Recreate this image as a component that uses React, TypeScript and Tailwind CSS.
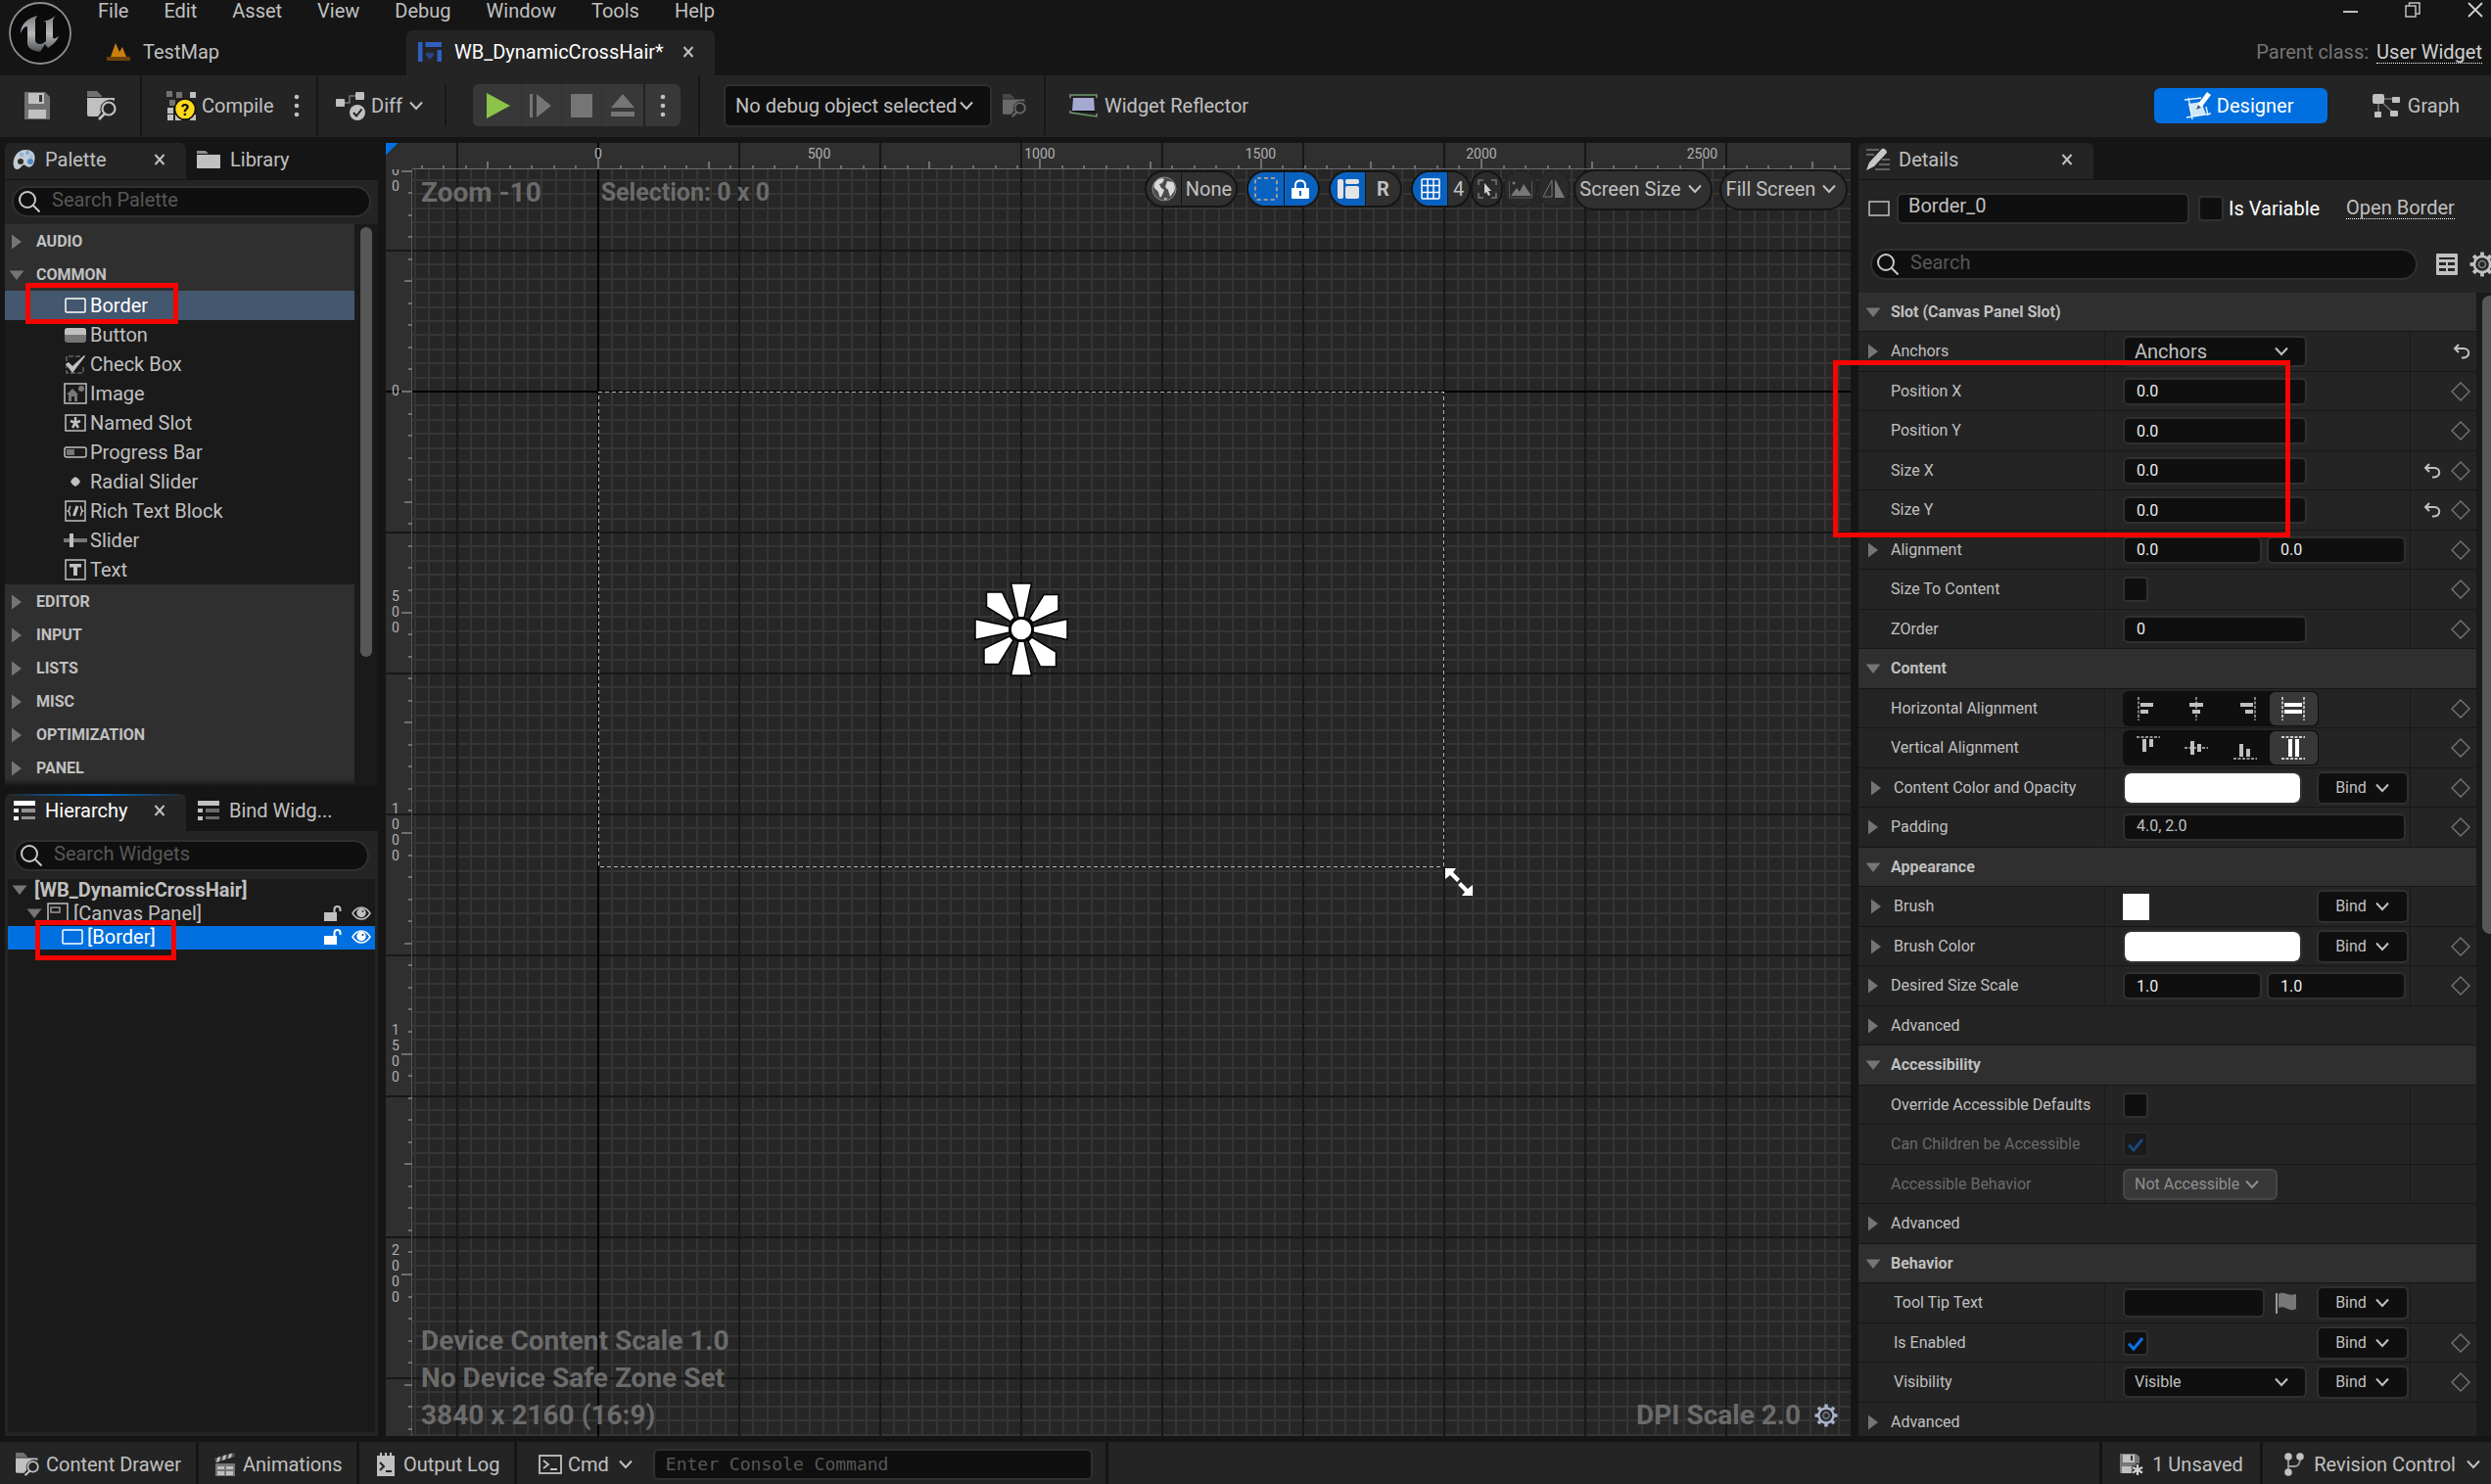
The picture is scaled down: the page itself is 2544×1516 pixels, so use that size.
import { type ReactNode } from 'react';
import clsx from 'clsx';

/* ---------- shared bits ---------- */

function Chevron({ className = '' }: { className?: string }) {
  return (
    <svg viewBox="0 0 16 10" className={clsx('h-[10px] w-4 shrink-0', className)} fill="none" stroke="currentColor" strokeWidth="2">
      <path d="M2 1.500 8 8l6-6.500" />
    </svg>
  );
}

function Caret({ open = false }: { open?: boolean }) {
  return open ? (
    <svg viewBox="0 0 16 16" className="h-4 w-4 shrink-0" fill="#757575"><path d="M.5 3.500h15L8 13z" /></svg>
  ) : (
    <svg viewBox="0 0 16 16" className="h-4 w-4 shrink-0" fill="#757575"><path d="M3 .5V15.500L13 8z" /></svg>
  );
}

function CloseX() {
  return (
    <svg viewBox="0 0 12 12" className="h-3 w-3" stroke="currentColor" strokeWidth="2"><path d="M1.500 1 10.500 11M10.500 1 1.500 11" /></svg>
  );
}

function Dots() {
  return (
    <svg viewBox="0 0 6 24" className="h-6 w-[6px]" fill="currentColor">
      <circle cx="3" cy="3" r="2.300" /><circle cx="3" cy="12" r="2.300" /><circle cx="3" cy="21" r="2.300" />
    </svg>
  );
}

function BrowseIcon({ className = '' }: { className?: string }) {
  return (
    <svg viewBox="0 0 30 30" className={clsx('shrink-0', className)}>
      <path d="M0 0h10l5 5v1H0z" fill="currentColor" opacity=".5" />
      <path d="M0 7h28v3a10 10 0 0 0-14 12l-3 4H2a2 2 0 0 1-2-2z" fill="currentColor" />
      <circle cx="22" cy="18" r="6.500" fill="none" stroke="currentColor" strokeWidth="2.200" />
      <path d="m18 23-6 6" stroke="currentColor" strokeWidth="2.600" />
    </svg>
  );
}

function SearchIcon() {
  return (
    <svg viewBox="0 0 22 22" className="h-[22px] w-[22px] shrink-0" fill="none" stroke="#c8c8c8" strokeWidth="2">
      <circle cx="9" cy="9" r="8" /><path d="m14.500 14.500 7 7" />
    </svg>
  );
}

function SearchBox({ placeholder, className = '' }: { placeholder: string; className?: string }) {
  return (
    <label className={clsx('flex h-8 shrink-0 items-center gap-3 rounded-full border-2 border-[#303030] bg-[#0f0f0f] pl-[5px] pr-4', className)}>
      <SearchIcon />
      <input aria-label={placeholder} placeholder={placeholder} className="min-w-0 flex-1 bg-transparent pb-1 text-xl leading-6 text-[#c0c0c0] outline-none placeholder:text-[#575757]" />
    </label>
  );
}

function ListIcon({ className = '' }: { className?: string }) {
  return (
    <svg viewBox="0 0 22 20" className={clsx('h-5 w-[22px]', className)} fill="currentColor">
      <path d="M0 0h22v5H0zM0 8h5v4H0zM0 16h5v4H0z" />
      <path d="M8 8h14v4H8zM8 16h14v3H8z" opacity=".5" />
    </svg>
  );
}

function Gear({ className = '' }: { className?: string }) {
  return (
    <svg viewBox="-12 -12 24 24" className={className} fill="none" stroke="currentColor">
      <circle r="7.500" strokeWidth="2.400" />
      <circle r="3.200" strokeWidth="1.500" opacity=".6" />
      {[0, 45, 90, 135, 180, 225, 270, 315].map((a) => (
        <path key={a} d="M0-8v-3.500" strokeWidth="3.500" transform={`rotate(${a})`} />
      ))}
    </svg>
  );
}

/* ---------- title bar and toolbar ---------- */

const menus = ['File', 'Edit', 'Asset', 'View', 'Debug', 'Window', 'Tools', 'Help'];

function UnrealLogo() {
  return (
    <svg viewBox="0 0 64 64" className="h-16 w-16">
      <defs>
        <linearGradient id="metal" x1="0" y1="0" x2="0" y2="1">
          <stop offset="0" stopColor="#7c8084" />
          <stop offset=".5" stopColor="#b4b8ba" />
          <stop offset="1" stopColor="#4f5254" />
        </linearGradient>
      </defs>
      <circle cx="32" cy="32" r="31" fill="#0b0b0b" stroke="#8d8f90" strokeWidth="1.800" />
      <path
        d="M12 32c0-9 7-16 18-18-2 1-3 3-3 5v20c0 3 3 4 5 4s4-1 6-3V22c0-2-1-3-3-2 5-1 9-3 13-6-2 2-3 4-3 6v16c0 2 2 2 6-1-2 5-6 9-11 12l-3-4-5 8c-7-1-12-3-13-8V27c0-4-4-2-7 5z"
        fill="url(#metal)"
      />
    </svg>
  );
}

function TitleBar() {
  return (
    <header className="flex h-[77px] shrink-0 bg-[#151515]">
      <div className="pl-[9px] pt-[2px]"><UnrealLogo /></div>
      <div className="flex min-w-0 flex-1 flex-col pl-[9px]">
        <nav className="flex h-[31px] items-start">
          {menus.map((m) => (
            <button key={m} className="px-[18px] pb-2 leading-[22px]">{m}</button>
          ))}
          <div className="ml-auto flex items-start gap-12 pr-2 pt-[2px]">
            <button aria-label="Minimize"><svg viewBox="0 0 16 16" className="h-4 w-4"><path d="M1 10h15" stroke="#c0c0c0" strokeWidth="2" /></svg></button>
            <button aria-label="Restore">
              <svg viewBox="0 0 16 16" className="h-4 w-4" fill="none" stroke="#c0c0c0" strokeWidth="1.500"><path d="M1 4h10v11H1zM4.500 4V1H15v11h-4" /></svg>
            </button>
            <button aria-label="Close window"><svg viewBox="0 0 16 16" className="h-4 w-4" stroke="#d0d0d0" strokeWidth="1.800"><path d="m1 1 14 14M15 1 1 15" /></svg></button>
          </div>
        </nav>
        <div className="flex flex-1 items-stretch pl-[27px]">
          <button className="flex w-[306px] items-center gap-[13px] pb-[2px]">
            <svg viewBox="0 0 24 20" className="h-5 w-6"><path d="M0 15h24v4H0z" fill="#6b4208" /><path d="M4 15 9 1l4 9 3-5 4 10z" fill="#c9800e" /></svg>
            TestMap
          </button>
          <div className="flex w-[315px] items-center rounded-t-md bg-[#242424] pb-[2px] pl-3 text-white">
            <svg viewBox="0 0 24 20" className="h-5 w-6" fill="#2f5fc0"><path d="M0 0h4.500v20H0zM7.500 0H24v5H7.500zM19.500 8H24v12h-4.500z" /><path d="M12 18 8 13.500c-1-3 3-4 4-1.500 1-2.500 5-1.500 4 1.500z" fill="#2a4580" /></svg>
            <span className="pl-[13px]">WB_DynamicCrossHair*</span>
            <button aria-label="Close WB_DynamicCrossHair" className="ml-auto mr-[21px] text-[#c0c0c0]"><CloseX /></button>
          </div>
          <div className="ml-auto flex items-center gap-2 pb-[2px] pr-[9px]">
            <span className="text-[#757575]">Parent class:</span>
            <a href="#user-widget" className="border-b border-dotted border-white leading-[22px] text-[#d0d0d0]">User Widget</a>
          </div>
        </div>
      </div>
    </header>
  );
}

function Toolbar() {
  return (
    <div className="flex h-[63px] shrink-0 items-stretch bg-[#242424] pb-[2px] pr-8">
      <div className="flex w-[145px] items-center border-r-2 border-[#151515] pl-[25px]">
        <button aria-label="Save">
          <svg viewBox="0 0 26 28" className="h-7 w-[26px]" fill="#c0c0c0"><path d="M0 0h21l5 5v23H0z" fill="#707070" /><path d="M4 1h16v11H4z" /><path d="M15 3h3v7h-3z" fill="#333" /><path d="M4 18h18v9H4z" /></svg>
        </button>
        <button aria-label="Browse" className="ml-[38px]"><BrowseIcon className="h-[30px] w-[30px]" /></button>
      </div>
      <div className="flex w-[180px] items-center border-r-2 border-[#151515] pl-[25px]">
        <button className="flex items-center gap-[6px]">
          <svg viewBox="0 0 30 30" className="h-[30px] w-[30px]" fill="#c0c0c0">
            <path d="M0 0h6v6H0zM10 1h6v6h-6zM3 9h6v6H3z" opacity=".5" />
            <path d="M24 1h6v6h-6zM1 17h6v6H1zM1 24h6v6H1zM9 24h6v6H9zM24 24h6v6h-6z" />
            <circle cx="19" cy="18.500" r="10.500" fill="#ffd91a" stroke="#111" strokeWidth="1.500" />
            <text x="19" y="24.500" textAnchor="middle" fontSize="17" fontWeight="700" fill="#111">?</text>
          </svg>
          Compile
        </button>
        <button aria-label="Compile options" className="ml-5"><Dots /></button>
      </div>
      <div className="flex w-[129px] items-center pl-[18px]">
        <button className="flex items-center gap-[6px]">
          <svg viewBox="0 0 30 30" className="h-[30px] w-[30px]" fill="#c0c0c0">
            <path d="M8 12h6V5h8" fill="none" stroke="#777" strokeWidth="1.500" />
            <rect x="0" y="8" width="9" height="8" rx="1" /><rect x="20" y="1" width="9" height="8" rx="1" />
            <circle cx="22" cy="22" r="8" /><path d="m18 22 3 3.500 5.500-7" fill="none" stroke="#222" strokeWidth="2" />
          </svg>
          Diff
          <Chevron />
        </button>
      </div>
      <div className="my-[9px] w-[2px] bg-[#171717]" />
      <div className="my-[9px] ml-[27px] flex w-[212px] items-stretch overflow-hidden rounded-md bg-[#383838]">
        <button aria-label="Play" className="grid w-[50px] place-items-center border-r border-[#303030] pl-[2px]"><svg viewBox="0 0 24 26" className="h-[26px] w-6"><path d="M0 0v26l24-13z" fill="#8bc24a" /></svg></button>
        <button aria-label="Step" className="grid w-[41px] place-items-center border-r border-[#303030]"><svg viewBox="0 0 24 24" className="h-6 w-6" fill="#757575"><path d="M0 0h3v24H0zM7 0v24l15-12z" /></svg></button>
        <button aria-label="Stop" className="grid w-[41px] place-items-center border-r border-[#303030]"><svg viewBox="0 0 22 24" className="h-6 w-[22px]"><path d="M0 0h22v24H0z" fill="#757575" /></svg></button>
        <button aria-label="Eject" className="grid w-[42px] place-items-center"><svg viewBox="0 0 24 24" className="h-6 w-6" fill="#757575"><path d="M12 0 24 14H0zM0 18h24v5H0z" /></svg></button>
        <button aria-label="Play options" className="grid flex-1 place-items-center border-l-2 border-[#222]"><Dots /></button>
      </div>
      <div className="ml-[18px] w-[2px] bg-[#171717]" />
      <div className="relative my-auto ml-6 w-[274px]">
        <select aria-label="Debug object" className="h-11 w-full appearance-none rounded-md border-2 border-[#303030] bg-[#0f0f0f] pl-[10px] text-[#c0c0c0]">
          <option>No debug object selected</option>
        </select>
        <Chevron className="pointer-events-none absolute right-[18px] top-[17px]" />
      </div>
      <button aria-label="Locate debug object" className="ml-[11px] text-[#6a6a6a]"><BrowseIcon className="h-6 w-6" /></button>
      <div className="ml-[18px] w-[2px] bg-[#171717]" />
      <button className="ml-6 flex items-center gap-[6px]">
        <svg viewBox="0 0 30 24" className="h-6 w-[30px]"><path d="M4 4h21l1 14-23-1z" fill="#a4aad0" /><path d="M3 17h23l2 2-25-1z" fill="#111" /><path d="M1 4V1h27v3M1 17v2l27 4v-3" fill="none" stroke="#6d9b6e" strokeWidth="1.500" /></svg>
        Widget Reflector
      </button>
      <div className="ml-auto flex items-center">
        <button className="flex h-9 w-[177px] items-center gap-[6px] rounded-md bg-[#0070e0] pl-[30px] text-white">
          <svg viewBox="0 0 28 28" className="h-7 w-7"><path d="M5 12 18 10l5 13-15 2z" fill="#cfe6f8" /><path d="M1 8l17-2M5 6l4 22M3 26l25-4M23 15l2 9" stroke="#e8f3fc" strokeWidth="1.400" fill="none" /><path d="m13 18 2-6L24 0l4 3-10 13z" fill="#fff" /><path d="m13 18 2-5 3 3z" fill="#3b5d80" /></svg>
          Designer
        </button>
        <button className="ml-[46px] flex items-center gap-2">
          <svg viewBox="0 0 28 24" className="h-6 w-7" fill="#c0c0c0"><path d="M6 5h18M6 5v16M6 5l16 15" stroke="#777" strokeWidth="1.500" /><rect width="12" height="10" rx="2" /><rect x="20" y="3" width="8" height="6" rx="1" /><rect x="2" y="18" width="7" height="6" rx="1" /><rect x="18" y="17" width="8" height="6" rx="1" /></svg>
          Graph
        </button>
      </div>
    </div>
  );
}

/* ---------- palette ---------- */

const paletteItems: { name: string; icon: ReactNode }[] = [
  { name: 'Border', icon: <rect x="2" y="5" width="20" height="14" rx="1" fill="none" stroke="currentColor" strokeWidth="1.500" /> },
  { name: 'Button', icon: <><rect x="1" y="5" width="22" height="15" rx="3" fill="#767676" /><path d="M4 5h16a3 3 0 0 1 3 3v4H1V8a3 3 0 0 1 3-3z" fill="currentColor" /></> },
  { name: 'Check Box', icon: <><path d="M17 4H3v17h17v-8" fill="none" stroke="#666" strokeWidth="1.500" strokeDasharray="5 2" /><path d="m2 12 3-2 4 4L21 3l1 1L9 21z" fill="currentColor" /></> },
  { name: 'Image', icon: <><rect x="1" y="2" width="22" height="20" fill="none" stroke="currentColor" strokeWidth="1.500" /><path d="M9 7 3 13h2v7h3v-5h3v5h3v-7h1z" fill="#777" /><circle cx="18" cy="7" r="3" fill="#777" /></> },
  { name: 'Named Slot', icon: <><rect x="2" y="4" width="20" height="16" fill="none" stroke="currentColor" strokeWidth="1.500" /><path d="M12 6v6m0 0-5-2m5 2 5-2m-5 2-3 5m3-5 3 5" stroke="currentColor" strokeWidth="2.500" /></> },
  { name: 'Progress Bar', icon: <><rect x="1" y="7" width="22" height="10" rx="2" fill="none" stroke="currentColor" strokeWidth="1.500" /><path d="M3 9h8v6H3z" fill="#777" /></> },
  { name: 'Radial Slider', icon: <path d="m12 7 3 2 2 3-2 3-3 2-3-2-2-3 2-3z" fill="currentColor" /> },
  { name: 'Rich Text Block', icon: <><rect x="2" y="2" width="20" height="20" fill="none" stroke="currentColor" strokeWidth="1.500" /><path d="M7 7c-2 2 0 4-2.500 5 2.500 1 .5 3 2.500 5M17 7c2 2 0 4 2.500 5-2.500 1-.5 3-2.500 5" fill="none" stroke="currentColor" strokeWidth="1.500" /><path d="m14 7-3.500 10" stroke="currentColor" strokeWidth="3" /></> },
  { name: 'Slider', icon: <><path d="M0 10h24v4H0z" fill="#777" /><path d="M6 5h4v14H6z" fill="currentColor" /></> },
  { name: 'Text', icon: <><rect x="2" y="2" width="20" height="20" fill="none" stroke="currentColor" strokeWidth="1.500" /><path d="M6 6h12v3.500h-4V18h-4V9.500H6z" fill="currentColor" /></> },
];

function CategoryRow({ name, open = false }: { name: string; open?: boolean }) {
  return (
    <button className="flex h-[34px] w-full shrink-0 items-center gap-3 bg-[#2f2f2f] pl-1 pt-[2px] text-base font-bold">
      <Caret open={open} />
      {name}
    </button>
  );
}

function PalettePanel() {
  return (
    <section className="flex min-h-0 flex-1 flex-col">
      <div className="flex h-[38px] shrink-0 items-stretch">
        <div className="mb-px flex w-[185px] items-center rounded-t-md bg-[#242424] pb-[3px] pl-2">
          <svg viewBox="0 0 24 24" className="h-6 w-6"><path d="M2 21C-2 14 3 2 13 2c8 0 11 5 9 12-1 6-6 7-9 4-2-1-3 0-4 1-2 3-5 4-7 2z" fill="#c3ccd3" /><circle cx="9" cy="7" r="2.300" fill="#8fb4d4" /><circle cx="15" cy="5" r="2" fill="#7fa9cf" /><circle cx="19" cy="9" r="2" fill="#9cc0dd" /><circle cx="18" cy="14" r="3" fill="#4f8ac4" /><circle cx="8" cy="14" r="3" fill="#2a2a2a" /></svg>
          <span className="pl-[9px]">Palette</span>
          <button aria-label="Close Palette" className="ml-auto mr-[21px]"><CloseX /></button>
        </div>
        <button className="flex items-center gap-[10px] pb-1 pl-[11px]">
          <svg viewBox="0 0 24 18" className="h-[18px] w-6" fill="#c0c0c0"><path d="M0 0h9l3 3H0z" opacity=".7" /><path d="M0 4h24v14H0z" /></svg>
          Library
        </button>
      </div>
      <div className="flex min-h-0 flex-1 flex-col bg-[#242424]">
        <SearchBox placeholder="Search Palette" className="mx-[7px] mb-[7px] mt-[6px]" />
        <div className="flex min-h-0 flex-1">
          <div className="relative min-w-0 flex-1 overflow-hidden bg-[#1a1a1a]">
            <CategoryRow name="AUDIO" />
            <CategoryRow name="COMMON" open />
            {paletteItems.map(({ name, icon }, i) => (
              <button key={name} className={clsx('relative flex h-[30px] w-full items-center gap-[3px] pl-[60px]', i === 0 && 'bg-[#43576e] text-white')}>
                <svg viewBox="0 0 24 24" className="h-6 w-6 shrink-0">{icon}</svg>
                {name}
                {i === 0 && <span className="absolute -top-2 left-[21px] h-[42px] w-[156px] border-[5px] border-[#f50400]" />}
              </button>
            ))}
            {['EDITOR', 'INPUT', 'LISTS', 'MISC', 'OPTIMIZATION', 'PANEL'].map((c) => <CategoryRow key={c} name={c} />)}
            <div className="absolute inset-x-0 bottom-0 h-2 bg-linear-to-b from-transparent to-[#1a1a1a]" />
          </div>
          <div className="w-6 bg-[#1a1a1a] pl-[6px] pt-[3px]"><div className="h-[77%] w-3 rounded-full bg-[#575757]" /></div>
        </div>
      </div>
    </section>
  );
}

/* ---------- hierarchy ---------- */

function RowToggles() {
  return (
    <div className="ml-auto flex items-center gap-[10px] pr-1">
      <button aria-label="Toggle lock">
        <svg viewBox="0 0 18 18" className="block h-[18px] w-[18px]" fill="currentColor"><path d="M0 8h13v9H0z" /><path d="M10.500 9V5c0-4 6-4 6 0v2" fill="none" stroke="currentColor" strokeWidth="2" /></svg>
      </button>
      <button aria-label="Toggle visibility">
        <svg viewBox="0 0 20 14" className="block h-[14px] w-5" fill="none" stroke="currentColor" strokeWidth="1.500"><path d="M1 7c5-8 13-8 18 0-5 8-13 8-18 0z" /><circle cx="10" cy="6.500" r="4" fill="currentColor" /><circle cx="11.500" cy="5" r="1" fill="#333" stroke="none" /></svg>
      </button>
    </div>
  );
}

function HierarchyPanel() {
  return (
    <section className="flex min-h-0 flex-1 flex-col">
      <div className="flex h-[38px] shrink-0 items-stretch">
        <div className="relative flex w-[185px] items-center overflow-hidden rounded-t-md bg-[#242424] pb-1 pl-[9px] text-white">
          <div className="absolute inset-x-0 top-0 h-[2px] bg-linear-to-r from-transparent via-[#0070e0] to-transparent" />
          <ListIcon />
          <span className="pl-[10px]">Hierarchy</span>
          <button aria-label="Close Hierarchy" className="ml-auto mr-[21px] text-[#c0c0c0]"><CloseX /></button>
        </div>
        <button className="flex items-center gap-[10px] pb-1 pl-3"><ListIcon />Bind Widg...</button>
      </div>
      <div className="flex min-h-0 flex-1 flex-col bg-[#242424] px-[3px] pb-1">
        <SearchBox placeholder="Search Widgets" className="mx-[6px] mb-2 mt-[9px]" />
        <div className="flex-1 bg-[#1a1a1a]">
          <div className="flex h-6 items-center gap-[7px] pb-[2px] pl-1 font-bold"><Caret open />[WB_DynamicCrossHair]</div>
          <div className="flex h-6 items-center pb-[2px] pl-[19px]">
            <Caret open />
            <svg viewBox="0 0 22 22" className="mx-[5px] h-[22px] w-[22px]" fill="none" stroke="#c0c0c0" strokeWidth="1.500"><path d="M1 22V1h20v21" /><rect x="4" y="5" width="9" height="5" stroke="#999" /></svg>
            [Canvas Panel]
            <RowToggles />
          </div>
          <div className="relative flex h-6 items-center bg-[#0070e0] pb-[2px] pl-[55px] text-white">
            <svg viewBox="0 0 22 16" className="mr-1 h-4 w-[22px]" fill="none" stroke="currentColor" strokeWidth="1.500"><rect x="1" y="1" width="20" height="14" rx="1" /></svg>
            [Border]
            <RowToggles />
            <span className="absolute -top-[6px] left-7 h-[41px] w-36 border-[5px] border-[#f50400]" />
          </div>
        </div>
      </div>
    </section>
  );
}

/* ---------- designer canvas ---------- */

// Canvas origin inside the viewport and the zoom factor (px per slate unit)
const ORIGIN_X = 217;
const ORIGIN_Y = 254;
const SCALE = 0.451;
const RULER = 27;
const minor = [1, 2, 3, 4, 5, 6, 7, 8, 9].map((i) => Math.round(i * 14.4));
const ticks = Array.from({ length: 84 }, (_, i) => (i - 14) * 50);

function Viewport() {
  return (
    <svg className="absolute inset-0 h-full w-full" shapeRendering="crispEdges">
      <defs>
        <pattern id="minor" x={ORIGIN_X} y={ORIGIN_Y} width="144" height="144" patternUnits="userSpaceOnUse">
          {minor.map((p) => <path key={p} d={`M${p} 0V144M0 ${p}H144`} stroke="#353535" strokeWidth="2" />)}
        </pattern>
        <pattern id="major" x={ORIGIN_X - 1} y={ORIGIN_Y - 1} width="144" height="144" patternUnits="userSpaceOnUse">
          <path d="M0 0h2v144H0zM0 0h144v2H0z" fill="#171717" />
        </pattern>
        <clipPath id="leftRuler"><rect x="0" y={RULER} width={RULER} height="100%" /></clipPath>
      </defs>
      <rect width="100%" height="100%" fill="#262626" />
      <rect width="100%" height="100%" fill="url(#minor)" />
      <rect width="100%" height={RULER} fill="#2f2f2f" />
      <rect width={RULER} height="100%" fill="#2f2f2f" />
      <rect width="100%" height="100%" fill="url(#major)" />
      <rect x={ORIGIN_X - 1} y="0" width="2" height="100%" fill="#000" />
      <rect x="0" y={ORIGIN_Y - 1} width="100%" height="2" fill="#000" />
      <rect width={RULER} height={RULER} fill="#2f2f2f" />
      <path d="M0 0h12L0 12z" fill="#0070e0" />
      <rect x={RULER} y={RULER - 1} width="100%" height="1" fill="#6a6a6a" />
      <rect x={RULER - 1} y={RULER} width="1" height="100%" fill="#555" />
      {ticks.map((v) => {
        const size = v % 500 === 0 ? 11 : v % 250 === 0 ? 8 : 4;
        const x = Math.round(ORIGIN_X + v * SCALE);
        const y = Math.round(ORIGIN_Y + v * SCALE);
        return (
          <g key={v} fill="#6f6f6f">
            {x > RULER && <rect x={x - 1} y={RULER - size} width="2" height={size} />}
            {y > RULER && <rect x={RULER - size} y={y - 1} width={size} height="2" />}
          </g>
        );
      })}
      <g fill="#b0b0b0" fontSize="14" textAnchor="middle">
        {[0, 500, 1000, 1500, 2000, 2500].map((v) => <text key={v} x={ORIGIN_X + v * SCALE} y="16">{v}</text>)}
        <g clipPath="url(#leftRuler)">
          {[-500, 0, 500, 1000, 1500, 2000].map((v) => {
            const digits = String(Math.abs(v)).split('');
            const top = ORIGIN_Y + v * SCALE - digits.length * 8 + 12;
            return (
              <text key={v}>
                {digits.map((d, i) => <tspan key={i} x="10" y={top + i * 16}>{d}</tspan>)}
              </text>
            );
          })}
        </g>
      </g>
      <rect x={ORIGIN_X} y={ORIGIN_Y} width="863" height="485" fill="none" stroke="#1b1b1b" />
      <rect x={ORIGIN_X} y={ORIGIN_Y} width="863" height="485" fill="none" stroke="#b5b5b5" strokeDasharray="4 3" />
      <g transform="translate(649 497)" fill="#fff" stroke="#000" strokeWidth="1.500" shapeRendering="auto">
        {[0, 90, 180, 270].map((a) => (
          <g key={a} transform={`rotate(${a})`}>
            <path d="M-10.500-47h21L3-12h-6z" />
            <path d="M-35.500-38h16L-7-12l-4 4-24.500-15z" />
          </g>
        ))}
        <circle r="11.500" strokeWidth="2.500" />
      </g>
      <path d="M0 0h11L8 4l7 7-3 3-7-7-5 4zM28 28H17l3-4-7-7 3-3 7 7 5-4z" transform="translate(1082 741)" fill="#fff" shapeRendering="auto" />
    </svg>
  );
}

const pill = 'flex h-[38px] items-stretch overflow-hidden rounded-[19px] border-2 border-[#151515] bg-[#303030]';

function ViewportBar() {
  return (
    <div className="absolute right-[3px] top-[27px] flex items-start">
      <div className={clsx(pill, 'mt-px w-[95px]')}>
        <button aria-label="Localization" className="grid w-9 place-items-center border-r border-[#151515]">
          <svg viewBox="0 0 26 26" className="h-[26px] w-[26px]"><circle cx="13" cy="13" r="12" fill="#4c4c4c" stroke="#8a8a8a" /><path d="M4 6c4-5 8-4 9-3l-2 4-3 1 2 4 3 2-2 5-2 3c-2-3-1-6-4-8s-3-5-1-8zM16 5l6 1c3 5 2 9 0 11l-3 4-2-7-3-3zM13 22l4 1-4 1z" fill="#d8d8d8" /></svg>
        </button>
        <button className="flex-1 text-center">None</button>
      </div>
      <div className={clsx(pill, 'ml-[9px] mt-px w-[75px]')}>
        <button aria-label="Show outlines" className="grid w-[37px] place-items-center border-r border-[#151515] bg-[#0a62c0]">
          <svg viewBox="0 0 26 26" className="h-[26px] w-[26px]"><rect x="2" y="2" width="22" height="22" rx="2" fill="none" stroke="#9a9a9a" strokeWidth="2" strokeDasharray="4 3" /></svg>
        </button>
        <button aria-label="Respect locks" className="flex flex-1 items-center bg-[#0a62c0] pl-[7px]">
          <svg viewBox="0 0 18 20" className="h-5 w-[18px]"><path d="M4 9V6c0-6 10-6 10 0v3" fill="none" stroke="#fff" strokeWidth="2" /><rect x="0" y="9" width="18" height="11" rx="1" fill="#fff" /><path d="M8 12h2v5H8z" fill="#0a62c0" /></svg>
        </button>
      </div>
      <div className={clsx(pill, 'ml-[9px] mt-px w-[75px]')}>
        <button aria-label="Layout flow" className="grid w-9 place-items-center border-r border-[#151515] bg-[#0a62c0]">
          <svg viewBox="0 0 22 20" className="h-5 w-[22px]" fill="#e4e4e4"><rect width="6" height="20" rx="2" /><rect x="8" width="14" height="5" rx="2" /><rect x="8" y="7" width="14" height="13" rx="2" /></svg>
        </button>
        <button className="flex-1 text-center text-xl font-bold">R</button>
      </div>
      <div className={clsx(pill, 'ml-[9px] mt-px w-[61px]')}>
        <button aria-label="Grid snapping" className="grid w-9 place-items-center border-r border-[#151515] bg-[#0a62c0]">
          <svg viewBox="0 0 20 22" className="h-[22px] w-5" fill="none" stroke="#fff" strokeWidth="1.500"><rect x="1" y="1" width="18" height="20" rx="1" /><path d="M7 1v20M13 1v20M1 7.500h18M1 14.500h18" /></svg>
        </button>
        <button className="flex-1 text-center">4</button>
      </div>
      <button aria-label="Selection mode" className="mt-px grid h-[38px] w-[33px] place-items-center rounded-full border-2 border-[#151515] bg-[#2b2b2b]">
        <svg viewBox="0 0 20 20" className="h-5 w-5"><path d="M1 6V1h5M14 1h5v5M19 14v5h-5M6 19H1v-5" fill="none" stroke="#777" strokeWidth="1.500" /><path d="m7 4 7 8h-3l2 4-2 1-2-4-2 2z" fill="#d0d0d0" /></svg>
      </button>
      <button aria-label="Background image" className="ml-px mt-px grid h-[38px] w-[34px] place-items-center rounded-full border border-[#202020] bg-[#2a2a2a]">
        <svg viewBox="0 0 24 20" className="h-5 w-6" fill="#777"><path d="m2 17 6-8 3 4 4-8 8 12z" /><circle cx="5" cy="4" r="1.500" /><path d="M.5 2v17h23V2" fill="none" stroke="#555" /></svg>
      </button>
      <button aria-label="Flip preview" className="ml-px mr-1 mt-px grid h-[38px] w-8 place-items-center rounded-full border border-[#202020] bg-[#2a2a2a]">
        <svg viewBox="0 0 24 20" className="h-5 w-6"><path d="M10 1v17H1z" fill="none" stroke="#777" /><path d="M13 0v19h10z" fill="#777" /></svg>
      </button>
      <button className="flex h-[42px] w-[142px] items-center justify-center gap-[6px] rounded-[21px] border-2 border-[#151515] bg-[#303030] pb-[2px] pr-1 whitespace-nowrap">Screen Size<Chevron /></button>
      <button className="ml-[7px] flex h-[42px] w-[131px] items-center justify-center gap-[6px] rounded-[21px] border-2 border-[#151515] bg-[#303030] pb-[2px] pr-1 whitespace-nowrap">Fill Screen<Chevron /></button>
    </div>
  );
}

function DesignerCanvas() {
  return (
    <main className="relative min-w-0 flex-1 overflow-hidden bg-[#262626]">
      <Viewport />
      <div className="absolute left-9 top-[35px] flex items-center gap-[61px] font-bold text-[#6b6b6b]">
        <span className="text-[28px] leading-8">Zoom -10</span>
        <span className="text-[25px] leading-8">Selection: 0 x 0</span>
      </div>
      <ViewportBar />
      <div className="absolute bottom-[2px] left-9 text-[28px] font-bold leading-[38px] text-[#6b6b6b]">
        <p>Device Content Scale 1.0</p>
        <p>No Device Safe Zone Set</p>
        <p>3840 x 2160 (16:9)</p>
      </div>
      <div className="absolute bottom-[2px] right-[13px] flex items-center gap-[14px] text-[28px] font-bold leading-[38px] text-[#6b6b6b]">
        DPI Scale 2.0
        <button aria-label="DPI settings" className="text-[#a9b4c9]"><Gear className="h-6 w-6" /></button>
      </div>
    </main>
  );
}

/* ---------- details ---------- */

const fieldBox = 'rounded-md border-2 border-[#303030] bg-[#0f0f0f]';

function slug(label: string) {
  return label.toLowerCase().replace(/\s+/g, '-');
}

function NumberField({ id, label, value, half = false }: { id?: string; label?: string; value: string; half?: boolean }) {
  return <input id={id} aria-label={label} defaultValue={value} className={clsx(fieldBox, 'h-7 pl-3 text-base leading-5 text-[#ededed]', half ? 'w-[142px]' : 'w-[188px]')} />;
}

function CheckField({ id, checked = false, disabled = false }: { id: string; checked?: boolean; disabled?: boolean }) {
  return (
    <span className={clsx('relative block h-[26px] w-[26px]', disabled && 'opacity-45')}>
      <input id={id} type="checkbox" defaultChecked={checked} disabled={disabled} className="peer block h-[26px] w-[26px] appearance-none rounded border-2 border-[#303030] bg-[#0f0f0f]" />
      <svg viewBox="0 0 26 26" className="pointer-events-none absolute inset-0 hidden peer-checked:block" fill="none" stroke="#0a74e8" strokeWidth="3"><path d="m6 13.500 5 5.500 9-11" /></svg>
    </span>
  );
}

function SelectField({ id, value, className, disabled = false }: { id: string; value: string; className?: string; disabled?: boolean }) {
  return (
    <span className={clsx('relative block', disabled ? 'w-[158px] text-[#909090]' : 'w-[188px]')}>
      <select id={id} disabled={disabled} className={clsx('block h-8 w-full appearance-none rounded-md border-2 pl-[10px] opacity-100', disabled ? 'border-[#474747] bg-[#383838]' : 'border-[#303030] bg-[#0f0f0f]', className)}>
        <option>{value}</option>
      </select>
      <Chevron className="pointer-events-none absolute right-[18px] top-[11px]" />
    </span>
  );
}

function ColorField({ id }: { id: string }) {
  return <button id={id} className="h-[34px] w-[183px] rounded-lg border-2 border-[#303030] bg-white bg-clip-padding" />;
}

function ResetButton({ label }: { label: string }) {
  return (
    <button aria-label={`Reset ${label}`}>
      <svg viewBox="0 0 18 16" className="block h-4 w-[18px]" fill="none" stroke="#c0c0c0" strokeWidth="2"><path d="M6 1 2 5l4 4M2 5h9c7 0 7 9 0 9.500H9" /></svg>
    </button>
  );
}

const rowBase = 'relative flex h-10 even:h-[41px] shrink-0 border-b border-[#171717] text-base';

function Section({ title }: { title: string }) {
  return (
    <button className={clsx(rowBase, 'items-center gap-[10px] bg-[#2f2f2f] pl-[7px] text-left font-bold')}>
      <Caret open />
      {title}
    </button>
  );
}

function Advanced() {
  return (
    <button className={clsx(rowBase, 'items-center gap-[10px] bg-[#242424] pl-[7px] text-left')}>
      <Caret />
      Advanced
    </button>
  );
}

type PropRowProps = {
  label: string;
  arrow?: boolean;
  bind?: boolean;
  disabled?: boolean;
  reset?: boolean;
  keyed?: boolean;
  group?: boolean;
  overlay?: ReactNode;
  children: ReactNode;
};

function PropRow({ label, arrow, bind, disabled, reset, keyed, group, overlay, children }: PropRowProps) {
  return (
    <div className={clsx(rowBase, 'bg-[#242424]')}>
      <div className={clsx('flex min-w-0 flex-1 items-center gap-[10px]', bind ? 'pl-[10px]' : 'pl-[7px]')}>
        {arrow ? <Caret /> : <span className="w-4" />}
        {group ? <span>{label}</span> : <label htmlFor={slug(label)} className={clsx(disabled && 'text-[#6a6a6a]')}>{label}</label>}
      </div>
      <div className="flex w-[313px] items-center gap-[5px] border-x border-[#1a1a1a] pl-[18px] pr-px">
        {children}
        {bind && (
          <button className={clsx(fieldBox, 'ml-auto flex h-[34px] w-[94px] items-center justify-center gap-2')} aria-label={`Bind ${label}`}>
            Bind<Chevron />
          </button>
        )}
      </div>
      <div className="flex w-[67px] items-center justify-end gap-[10px] pr-[6px]">
        {reset && <ResetButton label={label} />}
        {keyed && (
          <button aria-label={`Add key for ${label}`}>
            <svg viewBox="0 0 20 20" className="block h-5 w-5" fill="none" stroke="#777" strokeWidth="1.300"><path d="m10 1 9 9-9 9-9-9z" /></svg>
          </button>
        )}
      </div>
      {overlay}
    </div>
  );
}

const hAlign = [
  <><path d="M2 0v24" strokeDasharray="3 1.500" /><path d="M4 8h13M4 15h8" strokeWidth="4" /></>,
  <><path d="M12 0v24" strokeDasharray="3 1.500" /><path d="M5 8h14M8 15h8" strokeWidth="4" /></>,
  <><path d="M22 0v24" strokeDasharray="3 1.500" /><path d="M7 8h13M12 15h8" strokeWidth="4" /></>,
  <><path d="M1 0v24M23 0v24" strokeDasharray="3 1.500" /><path d="M3 8h18M3 15h18" strokeWidth="4" /></>,
];
const vAlign = [
  <><path d="M0 1h24" strokeDasharray="3 1.500" /><path d="M8 3v13M15 3v8" strokeWidth="4" /></>,
  <><path d="M0 12h24" strokeDasharray="3 1.500" /><path d="M8 5v14M15 8v8" strokeWidth="4" /></>,
  <><path d="M0 23h24" strokeDasharray="3 1.500" /><path d="M8 8v13M15 13v8" strokeWidth="4" /></>,
  <><path d="M0 1h24M0 23h24" strokeDasharray="3 1.500" /><path d="M9 3v18M16 3v18" strokeWidth="4" /></>,
];

function AlignGroup({ icons, names, label }: { icons: ReactNode[]; names: string[]; label: string }) {
  return (
    <div role="group" aria-label={label} className="flex h-9 w-[200px] items-center rounded-md bg-[#0f0f0f] p-px">
      {icons.map((icon, i) => (
        <button key={names[i]} aria-label={names[i]} className={clsx('grid h-[34px] flex-1 place-items-center rounded-md', i === 3 && 'bg-[#383838] text-white')}>
          <svg viewBox="0 0 24 24" className="h-6 w-6" fill="none" stroke="currentColor" strokeWidth="1.300">{icon}</svg>
        </button>
      ))}
    </div>
  );
}

function DetailsPanel() {
  return (
    <aside className="flex w-[646px] shrink-0 flex-col">
      <div className="flex h-[38px] shrink-0">
        <div className="mb-px flex w-60 items-center rounded-t-md bg-[#242424] pb-[3px] pl-2">
          <svg viewBox="0 0 24 24" className="h-6 w-6"><path d="M0 2h13M0 7h8M16 12h8M13 17h11M9 22h15" stroke="#777" strokeWidth="1.500" /><path d="m0 23 3-8L16 1c2-1 5 1 5 4L8 19z" fill="#c8c8c8" /></svg>
          <span className="pl-[9px]">Details</span>
          <button aria-label="Close Details" className="ml-auto mr-[21px]"><CloseX /></button>
        </div>
      </div>
      <div className="flex min-h-0 flex-1 flex-col bg-[#242424]">
        <div className="flex h-[57px] shrink-0 items-center pl-[10px]">
          <svg viewBox="0 0 22 16" className="h-4 w-[22px]" fill="none" stroke="#c0c0c0" strokeWidth="1.500"><rect x="1" y="1" width="20" height="14" /></svg>
          <input aria-label="Widget name" defaultValue="Border_0" className={clsx(fieldBox, 'ml-[7px] h-8 w-[299px] pb-[6px] pl-[10px]')} />
          <span className="ml-[9px]"><CheckField id="is-variable" /></span>
          <label htmlFor="is-variable" className="pl-[5px] text-white">Is Variable</label>
          <a href="#open-border" className="ml-[27px] border-b border-dotted border-white leading-[22px]">Open Border</a>
        </div>
        <div className="flex h-[58px] shrink-0 items-center pl-3">
          <SearchBox placeholder="Search" className="w-[559px]" />
          <button aria-label="Property matrix" className="ml-[19px] shrink-0">
            <svg viewBox="0 0 22 22" className="h-[22px] w-[22px]"><rect width="22" height="22" rx="1" fill="#c0c0c0" /><path d="M3 4h16v2H3zM3 9h7v3H3zM12 9h7v3h-7zM3 15h7v3H3zM12 15h7v3h-7z" fill="#242424" /></svg>
          </button>
          <button aria-label="View options" className="ml-3 shrink-0"><Gear className="h-[26px] w-[26px]" /></button>
        </div>
        <div className="flex min-h-0 flex-1">
          <div className="flex min-w-0 flex-1 flex-col overflow-y-clip">
            <Section title="Slot (Canvas Panel Slot)" />
            <PropRow label="Anchors" arrow reset><SelectField id="anchors" value="Anchors" className="text-xl leading-6" /></PropRow>
            <PropRow
              label="Position X"
              keyed
              overlay={<span className="pointer-events-none absolute -left-[26px] -top-3 z-10 h-[181px] w-[467px] border-[5px] border-[#f50400]" />}
            >
              <NumberField id="position-x" value="0.0" />
            </PropRow>
            <PropRow label="Position Y" keyed><NumberField id="position-y" value="0.0" /></PropRow>
            <PropRow label="Size X" reset keyed><NumberField id="size-x" value="0.0" /></PropRow>
            <PropRow label="Size Y" reset keyed><NumberField id="size-y" value="0.0" /></PropRow>
            <PropRow label="Alignment" arrow keyed group>
              <NumberField half label="Alignment X" value="0.0" />
              <NumberField half label="Alignment Y" value="0.0" />
            </PropRow>
            <PropRow label="Size To Content" keyed><CheckField id="size-to-content" /></PropRow>
            <PropRow label="ZOrder" keyed><NumberField id="zorder" value="0" /></PropRow>
            <Section title="Content" />
            <PropRow label="Horizontal Alignment" keyed group><AlignGroup label="Horizontal Alignment" icons={hAlign} names={['Left', 'Center', 'Right', 'Fill']} /></PropRow>
            <PropRow label="Vertical Alignment" keyed group><AlignGroup label="Vertical Alignment" icons={vAlign} names={['Top', 'Middle', 'Bottom', 'Fill']} /></PropRow>
            <PropRow label="Content Color and Opacity" arrow bind keyed><ColorField id="content-color-and-opacity" /></PropRow>
            <PropRow label="Padding" arrow keyed><input id="padding" defaultValue="4.0, 2.0" className={clsx(fieldBox, 'h-7 w-[289px] pb-1 pl-3')} /></PropRow>
            <Section title="Appearance" />
            <PropRow label="Brush" arrow bind><button id="brush" className="h-[27px] w-[27px] bg-white" /></PropRow>
            <PropRow label="Brush Color" arrow bind keyed><ColorField id="brush-color" /></PropRow>
            <PropRow label="Desired Size Scale" arrow keyed group>
              <NumberField half label="Desired Size Scale X" value="1.0" />
              <NumberField half label="Desired Size Scale Y" value="1.0" />
            </PropRow>
            <Advanced />
            <Section title="Accessibility" />
            <PropRow label="Override Accessible Defaults"><CheckField id="override-accessible-defaults" /></PropRow>
            <PropRow label="Can Children be Accessible" disabled><CheckField id="can-children-be-accessible" checked disabled /></PropRow>
            <PropRow label="Accessible Behavior" disabled><SelectField id="accessible-behavior" value="Not Accessible" disabled /></PropRow>
            <Advanced />
            <Section title="Behavior" />
            <PropRow label="Tool Tip Text" bind>
              <input id="tool-tip-text" className={clsx(fieldBox, 'h-[30px] w-[145px] px-3')} />
              <button aria-label="Localization settings" className="ml-[6px]">
                <svg viewBox="0 0 22 22" className="block h-[22px] w-[22px]"><path d="M1 1v21" stroke="#c0c0c0" strokeWidth="1.500" /><path d="M3 2c6-4 9 3 18 0v15c-8 4-10-4-18-1z" fill="#777" /></svg>
              </button>
            </PropRow>
            <PropRow label="Is Enabled" bind keyed><CheckField id="is-enabled" checked /></PropRow>
            <PropRow label="Visibility" bind keyed><SelectField id="visibility" value="Visible" /></PropRow>
            <Advanced />
          </div>
          <div className="w-[15px] overflow-hidden bg-[#1a1a1a] pl-[6px] pt-[3px]"><div className="h-[56%] w-4 rounded-full bg-[#575757]" /></div>
        </div>
      </div>
    </aside>
  );
}

/* ---------- status bar ---------- */

function StatusBar() {
  const cell = 'flex shrink-0 items-center border-r-[3px] border-[#151515] pt-[3px]';
  return (
    <footer className="flex h-[43px] shrink-0 items-stretch bg-[#242424] whitespace-nowrap">
      <button className={clsx(cell, 'w-[203px] gap-[7px] pl-4')}><BrowseIcon className="h-6 w-6" />Content Drawer</button>
      <button className={clsx(cell, 'w-[164px] gap-[7px] pl-4')}>
        <svg viewBox="0 0 22 24" className="h-6 w-[22px]" fill="#c0c0c0"><path d="m0 6 20-6 1 4L1 10z" fill="#555" /><path d="m3 5 3-1-1 5-3 1zM9 3l3-1-1 5-3 1zM15 1.500l3-1-1 4.500-3 1z" /><path d="M1 11h20v13H1z" fill="#777" /><path d="M3 14h7v3H3zM12 14h7v3h-7zM3 19h7v4H3zM12 19h7v4h-7z" /></svg>
        Animations
      </button>
      <button className={clsx(cell, 'w-[161px] gap-[9px] pl-[18px]')}>
        <svg viewBox="0 0 18 24" className="h-6 w-[18px]" fill="#c0c0c0"><path d="M0 3h18v21H0zM3 0h2v4H3zM8 0h2v4H8zM13 0h2v4h-2z" /><path d="m3 10 4 4-4 4M9 19h6" fill="none" stroke="#242424" strokeWidth="2" /></svg>
        Output Log
      </button>
      <div className={clsx(cell, 'w-[604px] pl-[22px]')}>
        <button className="flex items-center gap-[6px]">
          <svg viewBox="0 0 24 20" className="h-5 w-6" fill="none" stroke="#c0c0c0" strokeWidth="1.800"><rect x="1" y="1" width="22" height="18" /><path d="m5 6 5 4-5 4M12 15h7" /></svg>
          Cmd
          <Chevron className="ml-[3px]" />
        </button>
        <input aria-label="Console command" placeholder="Enter Console Command" className={clsx(fieldBox, 'ml-5 h-8 w-[449px] pb-[2px] pl-[11px] font-[DejaVu_Sans_Mono,monospace] text-lg leading-6 placeholder:text-[#575757]')} />
      </div>
      <div className="flex-1" />
      <button className={clsx(cell, 'w-[167px] gap-[9px] border-l-[3px] pl-[18px]')}>
        <svg viewBox="0 0 24 24" className="h-6 w-6" fill="#c0c0c0"><path d="M0 1h16l4 3v17H0z" fill="#777" /><path d="M3 2h12v8H3zM2 14h10v7H2z" /><path d="M11 3h2v5h-2z" fill="#333" /><path d="M18 11v13M12.500 14.500l11 6M23.500 14.500l-11 6" stroke="#242424" strokeWidth="4" /><path d="M18 12v11M13 15l10 5.500M23 15l-10 5.500" stroke="#d0d0d0" strokeWidth="2.200" /></svg>
        1 Unsaved
      </button>
      <button className="flex items-center gap-[10px] pl-[22px] pr-[10px] pt-[3px]">
        <svg viewBox="0 0 20 24" className="h-6 w-5" fill="#c0c0c0"><path d="M4 4v16M4 14h7c4 0 5-3 5-9" fill="none" stroke="#999" strokeWidth="1.800" /><circle cx="4" cy="4" r="3.800" /><circle cx="16" cy="4" r="3.800" /><circle cx="4" cy="20" r="3.800" /></svg>
        Revision Control
        <Chevron />
      </button>
    </footer>
  );
}

export default function App() {
  return (
    <div className="flex h-screen flex-col overflow-hidden bg-[#151515] font-[Roboto,sans-serif] text-xl leading-6 text-[#c0c0c0]">
      <TitleBar />
      <Toolbar />
      <div className="flex min-h-0 flex-1 gap-2 py-[6px] pl-[5px]">
        <div className="flex w-[381px] shrink-0 flex-col gap-2">
          <PalettePanel />
          <HierarchyPanel />
        </div>
        <DesignerCanvas />
        <DetailsPanel />
      </div>
      <StatusBar />
    </div>
  );
}
